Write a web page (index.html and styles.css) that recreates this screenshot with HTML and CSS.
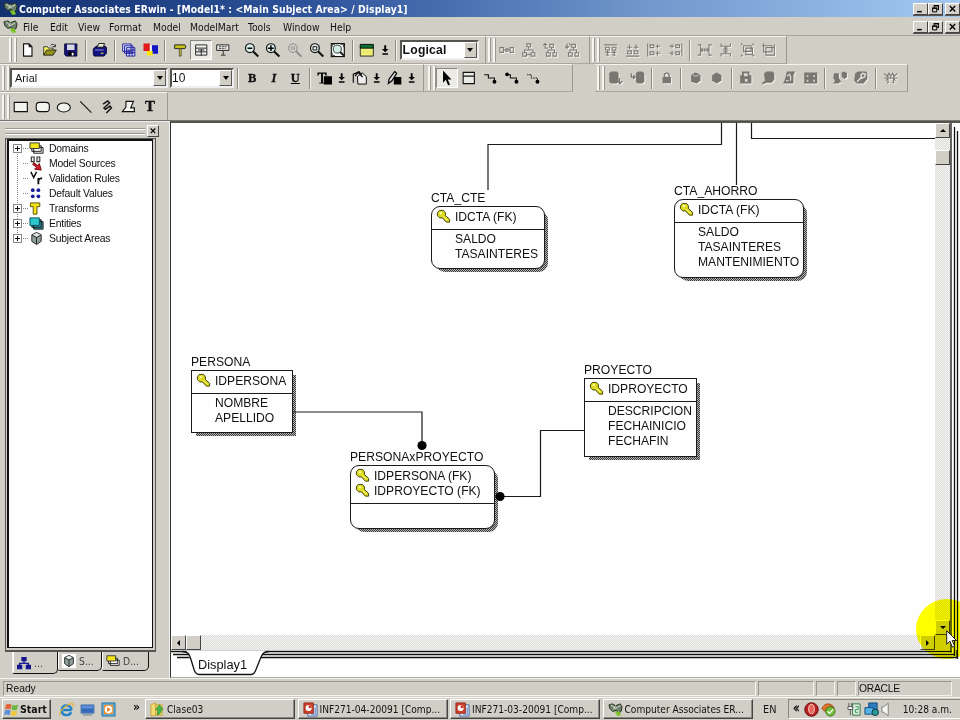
FILE: index.html
```html
<!DOCTYPE html>
<html lang="en">
<head>
<meta charset="utf-8">
<title>Computer Associates ERwin</title>
<link rel="stylesheet" href="styles.css">
</head>
<body>
<svg class="defs" width="0" height="0">
  <defs>
    <symbol id="app" viewBox="0 0 16 16"><path d="M1 3 5 2l3 2 5-2 2 3-1 5-3 2-2-3-4 1-3-3z" fill="#6d7f6a" stroke="#22301f"/><path d="M3 3l5 4 5-3M6 8l2-4" stroke="#dfe8d8" fill="none"/><path d="M7 10l3 5 4-1-2-4z" fill="#7cc426"/></symbol>
    <symbol id="new" viewBox="0 0 16 16"><path d="M3.500 1.500h6l3 3v10h-9zM9.500 1.500v3h3" fill="#fff" stroke="#111" stroke-width="1.200"/></symbol>
    <symbol id="open" viewBox="0 0 16 16"><path d="M1.500 13.500v-9h4l1 1.500h5v2" fill="#ff6" stroke="#333"/><path d="M1.500 13.500l3-5.500h10.500l-3.500 5.500z" fill="#96951a" stroke="#222"/><path d="M9 3c2-2 4-1 4.500 1M14 2v2.500h-3" fill="none" stroke="#222"/></symbol>
    <symbol id="save" viewBox="0 0 16 16"><path d="M1.500 1.500h13v13H3l-1.500-1.500z" fill="#15157c" stroke="#050530"/><path d="M4 2h8v6H4z" fill="#d7d7e4"/><path d="M5 10h7v4H5z" fill="#000"/><path d="M9 11h2v3H9z" fill="#fff"/></symbol>
    <symbol id="print" viewBox="0 0 16 16"><path d="M1 7l3-3h10l1.500 2v5l-3 3.500H2L1 12z" fill="#13137f" stroke="#05053a"/><path d="M5 5l2-4h6l-1 4z" fill="#e9e9d8" stroke="#111"/><path d="M3 8h9" stroke="#9b9bd8"/><path d="M9 11h3v1H9z" fill="#ee3"/></symbol>
    <symbol id="report" viewBox="0 0 16 16"><g fill="#dfe2ff" stroke="#1d1d9a"><path d="M1.500 1.500h9v8h-9zM3.500 3.500h9v8h-9zM5.500 5.500h9v9h-9z"/><path d="M5.500 8h9M8.500 8v6.500M11.500 8v6.500M5.500 11h9"/></g></symbol>
    <symbol id="colors" viewBox="0 0 16 16"><path d="M0 1h7v8H0z" fill="#e01818"/><path d="M9 3h7v9H9z" fill="#1212c8"/><path d="M4 9h6v5H4z" fill="#ffe800"/><path d="M7 3h2v6H7z" fill="#fff"/></symbol>
    <symbol id="tsign" viewBox="0 0 16 16"><path d="M2.500 2.500h11l1 2-1 2h-11z" fill="#c8c31c" stroke="#222"/><path d="M7.500 6.500h2v8h-2z" fill="#ddd632" stroke="#333" stroke-width=".8"/></symbol>
    <symbol id="ent" viewBox="0 0 16 16"><path d="M2.500 2.500h12v11h-12zM2.500 6h12M2.500 10h12" fill="#eee" stroke="#222"/><path d="M8.500 7v7M5 8h7" stroke="#222"/></symbol>
    <symbol id="board" viewBox="0 0 16 16"><path d="M1.500 2.500h13v6h-13z" fill="#e4e4e0" stroke="#222"/><path d="M4 4.500h8M4 6.500h7" stroke="#333" stroke-dasharray="2 1"/><path d="M8.500 9v4M6 13.500h5" stroke="#222"/></symbol>
    <symbol id="lens" viewBox="0 0 16 16"><circle cx="6" cy="6" r="4.700" fill="#dceeea" stroke="#111" stroke-width="1.300"/><path d="M9.500 9.500 15 15" stroke="#111" stroke-width="2.200"/></symbol>
    <symbol id="zout" viewBox="0 0 16 16"><use href="#lens"/><path d="M3.500 6h5" stroke="#000" stroke-width="1.600"/></symbol>
    <symbol id="zin" viewBox="0 0 16 16"><use href="#lens"/><path d="M3 6h6M6 3v6" stroke="#000" stroke-width="1.600"/></symbol>
    <symbol id="zoff" viewBox="0 0 16 16"><circle cx="6" cy="6" r="4.700" fill="none" stroke="#888"/><path d="M9.500 9.500 15 15" stroke="#888" stroke-width="2"/><path d="M4 5l1-1v4M7.500 4v4" stroke="#888" fill="none"/></symbol>
    <symbol id="zsel" viewBox="0 0 16 16"><use href="#lens"/><path d="M4 4.500h4v3.500H4z" fill="#fff" stroke="#000"/></symbol>
    <symbol id="zfit" viewBox="0 0 16 16"><path d="M1 1h14v14H1z" fill="#f8fbf8" stroke="#111" stroke-width="1.300"/><circle cx="7.500" cy="7" r="4.300" fill="#d2ece6" stroke="#333"/><path d="M10.500 10l4 4" stroke="#111" stroke-width="2"/><path d="M2 5V2h3M2 11v3h3M11 2h3v3" stroke="#333" fill="none"/></symbol>
    <symbol id="win" viewBox="0 0 16 16"><path d="M1 2.500h14v12H1z" fill="#efee77" stroke="#222"/><path d="M1 2h14v4H1z" fill="#087030" stroke="#111"/><path d="M2 10h12" stroke="#d9d650" stroke-dasharray="1 1"/></symbol>
    <symbol id="down" viewBox="0 0 10 16"><path d="M4 3h2v4h2.500L5 10.500 1.500 7H4zM2 11.500h6V13H2z" fill="#000"/></symbol>
    <symbol id="d1" viewBox="0 0 16 16"><path d="M.5 5.500h4v5h-4zM11.500 5.500h4v5h-4zM5 8h6" class="g"/><circle cx="8" cy="8" r="1.500" class="g"/></symbol>
    <symbol id="d2" viewBox="0 0 16 16"><path d="M6 1.500h4v3H6zM8 5v3M3.500 11V8h9v3M1.500 11h4v3.500h-4zM10.500 11h4v3.500h-4zM6 13h4" class="g"/></symbol>
    <symbol id="d3" viewBox="0 0 16 16"><path d="M8 2h4v3H8zM10 5v3M6 11V8h7v3M4.500 11h4v3.500h-4zM11.500 11h4v3.500h-4zM1 3l2-2 2 2M3 1v5h3" class="g"/></symbol>
    <symbol id="d4" viewBox="0 0 16 16"><path d="M8 2h4v3H8zM10 5v3M6 11V8h7v3M4.500 11h4v3.500h-4zM11.500 11h4v3.500h-4zM1 4l2 2 2-2M3 1v5M5 1l2 2" class="g"/></symbol>
    <symbol id="a1" viewBox="0 0 16 16"><path d="M1 2.500h14M2.500 5h4v3h-4zM9.500 5h4v3h-4zM4.500 8v5M11.500 8v5M2 10.500h5M9 10.500h5M3 13.500h3M10 13.500h3" class="g"/></symbol>
    <symbol id="a2" viewBox="0 0 16 16"><path d="M1 14.500h14M2.500 9h4v3h-4zM9.500 9h4v3h-4zM4.500 2v5M11.500 2v5M2 5h5M9 5h5" class="g"/></symbol>
    <symbol id="a3" viewBox="0 0 16 16"><path d="M1.500 1v14M4 2.500h4v3H4zM4 10h4v3H4zM10 4h5M12 2v4M10 11.500h5M12 9v5" class="g"/></symbol>
    <symbol id="a4" viewBox="0 0 16 16"><path d="M14.500 1v14M8 2.500h4v3H8zM8 10h4v3H8zM1 4h5M4 2v4M1 11.500h5M4 9v5" class="g"/></symbol>
    <symbol id="a5" viewBox="0 0 16 16"><path d="M.5 2.500h3v11h-3M15.500 2.500h-3v11h3M3 8h10M6 6L4 8l2 2M10 6l2 2-2 2M8 6v4" class="g"/></symbol>
    <symbol id="a6" viewBox="0 0 16 16"><path d="M3 1v3h10V1M3 15v-3h10v3M8 4v8M6 6h4M6 10h4M5 8h6" class="g"/></symbol>
    <symbol id="a7" viewBox="0 0 16 16"><path d="M3.500 3.500h8v6h-8zM6 6h7v7H6z" class="g"/><path d="M.5 1h2v2h-2zM13 1h2v2h-2zM.5 13h2v2h-2zM13 13h2v2h-2z" fill="#85857f"/></symbol>
    <symbol id="a8" viewBox="0 0 16 16"><path d="M2.500 1v9h9V3.500H0M5 5.500h9v8H5zM14 5v-3" class="g"/></symbol>
    <symbol id="bt" viewBox="0 0 16 16"><path d="M0 2h10v3.500H9L8 3.500H6V13h2v1H2v-1h2V3.500H2L1 5.500H0z" fill="#000"/><path d="M7 6h9v9H7z" fill="#000"/></symbol>
    <symbol id="bucket" viewBox="0 0 16 16"><path d="M5.500 6.500l5-4 4.500 4v8H6z" fill="#eee" stroke="#000"/><path d="M1 13V4l5-2 5 5M3 6l4-5 3 4" fill="none" stroke="#111" stroke-width="1.400"/></symbol>
    <symbol id="pen" viewBox="0 0 16 16"><path d="M7 7h8v8H7z" fill="#000"/><path d="M1 14l1-5 6-8 2 2-5 8z" fill="#ddd" stroke="#000" stroke-width="1.300"/></symbol>
    <symbol id="ptr" viewBox="0 0 16 16"><path d="M4 0v13l3-3 2.500 6 2-1L9 9.500h4z" fill="#000"/></symbol>
    <symbol id="tbl" viewBox="0 0 16 16"><path d="M2 2h12v12H2zM2 6h12" fill="#ebebe5" stroke="#111" stroke-width="1.200"/></symbol>
    <symbol id="r1" viewBox="0 0 16 16"><path d="M2 4.500h4.500V8H13v3" fill="none" stroke="#111" stroke-width="1.200"/><circle cx="13" cy="12" r="2.100"/></symbol>
    <symbol id="r2" viewBox="0 0 16 16"><path d="M2 4.500h4.500V8H13v3" fill="none" stroke="#111" stroke-width="1.200"/><circle cx="3" cy="4" r="2"/><circle cx="13" cy="12" r="2.100"/></symbol>
    <symbol id="r3" viewBox="0 0 16 16"><path d="M2 4.500h4.500V8H13v3" fill="none" stroke="#111" stroke-width="1.200" stroke-dasharray="1.500 1"/><circle cx="13" cy="12" r="2.100"/></symbol>
    <symbol id="db" viewBox="0 0 16 16"><path d="M1 3l2-2h6l2 2v9l-2 2H3l-2-2z" fill="#777770"/><path d="M12 8v5M10 11l2.500 3 2.500-3" stroke="#777770" fill="none" stroke-width="1.400"/></symbol>
    <symbol id="db2" viewBox="0 0 16 16"><path d="M6 3l2-2h5l2 2v9l-2 2H8l-2-2z" fill="#777770"/><path d="M1 3v4h4M3 5l2 2-2 2" stroke="#777770" fill="none" stroke-width="1.400"/></symbol>
    <symbol id="lock" viewBox="0 0 16 16"><path d="M3.500 7h9v6.500h-9z" fill="#777770"/><path d="M5.500 7V5c0-3 5-3 5 0v2" fill="none" stroke="#777770" stroke-width="1.500"/></symbol>
    <symbol id="cube" viewBox="0 0 16 16"><path d="M3 5l4-3 3 1 3 2v6l-4 3-6-2z" fill="#777770"/><path d="M5 5l3 1 3-1" stroke="#ccc" fill="none"/></symbol>
    <symbol id="hexa" viewBox="0 0 16 16"><path d="M8 2l5 3v6l-5 3-5-3V5z" fill="#777770"/></symbol>
    <symbol id="e1" viewBox="0 0 16 16"><path d="M4 1h8v4h2v9H2V5h2z" fill="#777770"/><path d="M6 3h4v3H6zM7 9h3v3H7z" fill="#d8d6ce"/></symbol>
    <symbol id="e2" viewBox="0 0 16 16"><path d="M4 3l3-2h6l2 2v7l-3 3H7l-5 2v-2l3-2z" fill="#777770"/></symbol>
    <symbol id="e3" viewBox="0 0 16 16"><path d="M6 1h9l-2 4v9H2l2-5z" fill="#777770"/><path d="M6 6l3-2 1 4M5 11h3M10 6v5" stroke="#e6e4dd" stroke-width="1.200" fill="none"/></symbol>
    <symbol id="e4" viewBox="0 0 16 16"><path d="M1 2h14v12H1z" fill="#777770"/><path d="M3.500 5h2v2h-2zM10.500 5h2v2h-2zM3.500 10h2v2h-2zM10.500 10h2v2h-2z" fill="#d0cec6"/></symbol>
    <symbol id="e5" viewBox="0 0 16 16"><path d="M2 3h5v5l2 3-2 3H1l2-3-2-3z" fill="#777770"/><path d="M10 2l3-1 3 2v4l-3 2-3-2z" fill="#777770"/><path d="M6 12h4" stroke="#777770"/></symbol>
    <symbol id="e6" viewBox="0 0 16 16"><path d="M2 3l3-2h9l1 2v6l-4 5H4l-3-3z" fill="#777770"/><path d="M4 12l5-5M8 5l2-2 3 1-1 3-3 1z" stroke="#e4e2da" stroke-width="1.500" fill="none"/></symbol>
    <symbol id="e7" viewBox="0 0 16 16"><path d="M1 3l3 3 2-3 2 3 2-3 2 3 3-3M1 8h14M5 5v8M8 5v4M11 5v8M3 11l2-3M13 11l-2-3M4 13h2M10 13h2" class="g"/></symbol>
    <symbol id="key" viewBox="0 0 16 16"><path d="M1.500 4l2-2.500h4.500L10 4v3l4.500 4v3h-3.500L7 9.500H4L1.500 7z" fill="#dcdb20" stroke="#3c3c00"/><path d="M4 4.500h2.500" stroke="#fffbb0" stroke-width="2"/><path d="M8 8l4 4" stroke="#fffa90"/></symbol>
    <symbol id="dom" viewBox="0 0 16 16"><path d="M5 7h10v6H5zM3 5h10v6H3z" fill="#fff" stroke="#111"/><path d="M1 2h10v6H1z" fill="#f3e51a" stroke="#333"/></symbol>
    <symbol id="msrc" viewBox="0 0 16 16"><path d="M2.500 1v5h3V1zM8.500 1v5h3V1z" fill="#eee" stroke="#333" stroke-width="1.200"/><path d="M5 7l4 3 2-2 2 7-7-1 2-2-4-3z" fill="#cc1f2f" stroke="#700"/></symbol>
    <symbol id="vr" viewBox="0 0 16 16"><path d="M2 1l3 6 3-6" fill="none" stroke="#111" stroke-width="1.600"/><path d="M10 14V7.500M10 10c1-2 2-2.500 4-2" fill="none" stroke="#111" stroke-width="2"/></symbol>
    <symbol id="dots" viewBox="0 0 16 16"><g fill="#1b1b9c"><circle cx="4" cy="4.500" r="2"/><circle cx="10" cy="4.500" r="2"/><circle cx="4" cy="11" r="2"/><circle cx="10" cy="11" r="2"/></g></symbol>
    <symbol id="tt" viewBox="0 0 16 16"><path d="M1.500 2h10v4h-3v8h-4V6h-3z" fill="#f2e21a" stroke="#5a5000"/></symbol>
    <symbol id="enti" viewBox="0 0 16 16"><path d="M5 6h10v8H5zM3 4h10v8H3z" fill="#39a" stroke="#111"/><path d="M1 2h10v8H1z" fill="#2cc7cf" stroke="#0a4d55"/></symbol>
    <symbol id="subj" viewBox="0 0 16 16"><path d="M8 1.500l5 2.500v7l-5 3.500L3 11V4z" fill="#8ea09a" stroke="#222"/><path d="M8 7v7M3.500 4.500L8 7l4.500-2.500" stroke="#222" fill="none"/><path d="M8 2l4 2-4 2-4-2z" fill="#dfe5e2"/></symbol>
    <symbol id="tree" viewBox="0 0 16 16"><path d="M5 1h6v5H5zM0 10h6v5H0zM10 10h6v5h-6z" fill="#151591"/><path d="M8 5v4M3 11V8.500h10V11" stroke="#151591" fill="none" stroke-width="1.500"/></symbol>
    <symbol id="flag" viewBox="0 0 16 16"><path d="M2 3c2-2 4-1 6 0L7 8C5 7 3 7 1 8z" fill="#e2643a"/><path d="M9 3c2 1 4 1 6 0l-1 5c-2 1-4 1-6 0z" fill="#6bb544"/><path d="M1 9c2-1 4-1 6 0l-1 5c-2-1-4-1-6 0z" fill="#5b90d8"/><path d="M8 9c2 1 4 1 6 0l-1 5c-2 1-4 1-6 0z" fill="#f0c93c"/></symbol>
    <symbol id="ie" viewBox="0 0 16 16"><path d="M13.500 8.500H4.500M13.300 8.500C13 2.500 3.500 2 3 8.500s8 7 10 2.500" fill="none" stroke="#2582c8" stroke-width="2.600"/><path d="M1 14C-1 10 11 0 15 2c1 1 0 2-.5 3" fill="none" stroke="#e5b53a" stroke-width="1.300"/></symbol>
    <symbol id="desk" viewBox="0 0 16 16"><path d="M1 3h14v9H1z" fill="#3568b8" stroke="#6a89b5"/><path d="M2 4h12v3H2z" fill="#5e90d8"/><path d="M3 13h10v1.500H3z" fill="#8393aa"/></symbol>
    <symbol id="wmp" viewBox="0 0 16 16"><path d="M1 1h14v14H1z" fill="#55a9d8" stroke="#2c77a8"/><path d="M3 3h10v10H3z" fill="#ef9430"/><circle cx="8" cy="8" r="4" fill="#fff"/><path d="M6.500 5.500v5l4-2.500z" fill="#e8751b"/></symbol>
    <symbol id="fold" viewBox="0 0 16 16"><path d="M1 3l5-2v13l-5 1zM6 3h7v11H6z" fill="#f3dc72" stroke="#c9a63b"/><path d="M8 14V8H6l4-5 4 5h-2c0 3-1 5-4 6z" fill="#48b54a" stroke="#24872b" stroke-width=".7"/></symbol>
    <symbol id="ppt" viewBox="0 0 16 16"><path d="M5 3h10v12H5z" fill="#dbe6f6" stroke="#4468a0"/><path d="M9 13h5M13 6v6" stroke="#547bc0"/><path d="M1 1h10v11H1z" fill="#ce412c" stroke="#98291a"/><circle cx="6" cy="6.500" r="3.200" fill="#fff"/><path d="M6 6.500V3.300A3.200 3.200 0 0 1 9.200 6.500z" fill="#ce412c"/></symbol>
    <symbol id="red" viewBox="0 0 16 16"><circle cx="8" cy="8" r="7.200" fill="#b81f20" stroke="#661010"/><ellipse cx="8" cy="7.500" rx="3" ry="5" fill="#e66558" stroke="#ffd8d0"/></symbol>
    <symbol id="eye" viewBox="0 0 16 16"><path d="M1 7c3-7 10-6 13-1-5-2-8 0-10 4z" fill="#e2742c" stroke="#a34b16"/><circle cx="10" cy="10" r="5" fill="#72bd37" stroke="#37761d"/><path d="M7 10l2 2 4-4" fill="none" stroke="#fff" stroke-width="1.500"/></symbol>
    <symbol id="usb" viewBox="0 0 16 16"><path d="M6 2h8v12H6z" fill="#dceddb" stroke="#2e7748"/><path d="M2 1v4M5 1v4M1 5h5v3H1zM3.500 8v6" fill="#fff" stroke="#555"/><path d="M9 5h3v3H9v3h3" stroke="#36965a" fill="none"/></symbol>
    <symbol id="net" viewBox="0 0 16 16"><path d="M5 1h9v7H5z" fill="#2e7fc2" stroke="#164a78"/><path d="M1 6h9v7H1z" fill="#55b3e6" stroke="#164a78"/><circle cx="12" cy="11" r="3.500" fill="#2a9a8c" stroke="#135"/></symbol>
    <symbol id="spk" viewBox="0 0 10 16"><path d="M1 5h2l5-4v14l-5-4H1z" fill="#f5f5f2" stroke="#777"/></symbol>
    <symbol id="minw" viewBox="0 0 14 12"><path d="M3 9.200h5.500" stroke="#000" stroke-width="1.800"/></symbol>
    <symbol id="rest" viewBox="0 0 14 12"><path d="M5.500 4V2h5v4.500H9" fill="none" stroke="#000" stroke-width="1.300"/><path d="M5 2h6M3 5h6" stroke="#000" stroke-width="1.600"/><path d="M3.500 5h5v4.500h-5z" fill="none" stroke="#000" stroke-width="1.200"/></symbol>
    <symbol id="x" viewBox="0 0 14 12"><path d="M3.800 2.500l6.400 6.500M10.200 2.500L3.800 9" stroke="#000" stroke-width="1.600"/></symbol>
  </defs>
</svg>

<header class="titlebar">
  <svg class="ic"><use href="#app"/></svg>
  <h1>Computer Associates ERwin - [Model1* : &lt;Main Subject Area&gt; / Display1]</h1>
  <div class="winbtns"><svg><use href="#minw"/></svg><svg><use href="#rest"/></svg><svg class="gap"><use href="#x"/></svg></div>
</header>
<nav class="menubar">
  <svg class="ic"><use href="#app"/></svg>
  <span>File</span><span>Edit</span><span>View</span><span>Format</span><span>Model</span><span>ModelMart</span><span>Tools</span><span>Window</span><span>Help</span>
  <div class="winbtns"><svg><use href="#minw"/></svg><svg><use href="#rest"/></svg><svg class="gap"><use href="#x"/></svg></div>
</nav>

<section class="tools">
  <div class="row">
    <div class="band b1"><i class="grip"></i>
      <svg><use href="#new"/></svg><svg><use href="#open"/></svg><svg><use href="#save"/></svg><i class="sep"></i>
      <svg><use href="#print"/></svg><i class="sep"></i>
      <svg><use href="#report"/></svg><svg><use href="#colors"/></svg><i class="sep"></i>
      <svg><use href="#tsign"/></svg><svg class="on"><use href="#ent"/></svg><svg><use href="#board"/></svg><i class="sep none"></i>
      <svg><use href="#zout"/></svg><svg><use href="#zin"/></svg><svg><use href="#zoff"/></svg><svg><use href="#zsel"/></svg><svg><use href="#zfit"/></svg><i class="sep"></i>
      <svg><use href="#win"/></svg><svg class="dn"><use href="#down"/></svg><i class="sep"></i>
      <div class="combo logical"><b>Logical</b><i class="drop"></i></div>
    </div>
    <div class="band b2 off"><i class="grip"></i>
      <svg><use href="#d1"/></svg><svg><use href="#d2"/></svg><svg><use href="#d3"/></svg><svg><use href="#d4"/></svg>
    </div>
    <div class="band b3 off"><i class="grip"></i>
      <svg><use href="#a1"/></svg><svg><use href="#a2"/></svg><svg><use href="#a3"/></svg><svg><use href="#a4"/></svg><i class="sep"></i>
      <svg><use href="#a5"/></svg><svg><use href="#a6"/></svg><svg><use href="#a7"/></svg><svg><use href="#a8"/></svg>
    </div>
  </div>
  <div class="row">
    <div class="band c1"><i class="grip"></i>
      <div class="combo face"><span>Arial</span><i class="drop"></i></div>
      <div class="combo size"><span>10</span><i class="drop"></i></div><i class="sep"></i>
      <b class="fmt">B</b><b class="fmt it">I</b><b class="fmt ul">U</b><i class="sep"></i>
      <svg><use href="#bt"/></svg><svg class="dn"><use href="#down"/></svg>
      <svg><use href="#bucket"/></svg><svg class="dn"><use href="#down"/></svg>
      <svg><use href="#pen"/></svg><svg class="dn"><use href="#down"/></svg>
    </div>
    <div class="band c2"><i class="grip"></i>
      <svg class="on"><use href="#ptr"/></svg><svg><use href="#tbl"/></svg><svg><use href="#r1"/></svg><svg><use href="#r2"/></svg><svg><use href="#r3"/></svg>
    </div>
    <div class="band c3 off"><i class="grip"></i>
      <svg><use href="#db"/></svg><svg><use href="#db2"/></svg><i class="sep"></i>
      <svg><use href="#lock"/></svg><i class="sep"></i>
      <svg><use href="#cube"/></svg><svg><use href="#hexa"/></svg><i class="sep"></i>
      <svg><use href="#e1"/></svg><svg><use href="#e2"/></svg><svg><use href="#e3"/></svg><svg><use href="#e4"/></svg><i class="sep"></i>
      <svg><use href="#e5"/></svg><svg><use href="#e6"/></svg><i class="sep"></i>
      <svg><use href="#e7"/></svg>
    </div>
  </div>
  <div class="row last">
    <div class="band s1"><i class="grip"></i>
      <svg viewBox="0 0 16 16"><path d="M1 3h14v10H1z" class="k"/></svg>
      <svg viewBox="0 0 16 16"><rect x="1" y="3" width="14" height="10" rx="3.500" class="k"/></svg>
      <svg viewBox="0 0 16 16"><ellipse cx="8" cy="8.500" rx="7" ry="4.800" class="k"/></svg>
      <svg viewBox="0 0 16 16"><path d="M2 2l12 12" class="k"/></svg>
      <svg viewBox="0 0 16 16"><path d="M4 5l5-3.500 2 2L5 9l1.500 1.500 5-3.500 1.500 2-5.500 5.500" class="k n"/></svg>
      <svg viewBox="0 0 16 16"><path d="M5 2h8l-3 7h4v4H1l4-5z" class="k"/></svg>
      <b class="fmt big">T</b>
    </div>
  </div>
</section>

<main>
  <aside>
    <div class="dock"><i></i><svg><use href="#x"/></svg></div>
    <div class="treebox">
      <ul>
        <li class="p"><svg><use href="#dom"/></svg>Domains</li>
        <li><svg><use href="#msrc"/></svg>Model Sources</li>
        <li><svg><use href="#vr"/></svg>Validation Rules</li>
        <li><svg><use href="#dots"/></svg>Default Values</li>
        <li class="p"><svg><use href="#tt"/></svg>Transforms</li>
        <li class="p"><svg><use href="#enti"/></svg>Entities</li>
        <li class="p"><svg><use href="#subj"/></svg>Subject Areas</li>
      </ul>
    </div>
    <div class="tabs">
      <span class="cur"><svg><use href="#tree"/></svg>...</span><span><svg class="w"><use href="#subj"/></svg>S...</span><span><svg><use href="#dom"/></svg>D...</span>
    </div>
  </aside>
  <section class="work">
    <div class="view">
      <div class="canvas">
        <article class="node round cte"><h2>CTA_CTE</h2><div class="box"><p class="pk"><svg><use href="#key"/></svg>IDCTA (FK)</p><div><p>SALDO</p><p>TASAINTERES</p></div></div></article>
        <article class="node round aho"><h2>CTA_AHORRO</h2><div class="box"><p class="pk"><svg><use href="#key"/></svg>IDCTA (FK)</p><div><p>SALDO</p><p>TASAINTERES</p><p>MANTENIMIENTO</p></div></div></article>
        <article class="node per"><h2>PERSONA</h2><div class="box"><p class="pk"><svg><use href="#key"/></svg>IDPERSONA</p><div><p>NOMBRE</p><p>APELLIDO</p></div></div></article>
        <article class="node pro"><h2>PROYECTO</h2><div class="box"><p class="pk"><svg><use href="#key"/></svg>IDPROYECTO</p><div><p>DESCRIPCION</p><p>FECHAINICIO</p><p>FECHAFIN</p></div></div></article>
        <article class="node round pxp"><h2>PERSONAxPROYECTO</h2><div class="box"><p class="pk two"><svg><use href="#key"/></svg>IDPERSONA (FK)<br><svg><use href="#key"/></svg>IDPROYECTO (FK)</p><div></div></div></article>
        <svg class="links" viewBox="171 123 764 512"><g fill="none" stroke="#1a1a1a" stroke-width="1.200"><path d="M721.500 122v22.500H488V190M736.500 122v63M751.500 122v16.500H936M293 412h129v30M584 430.500h-43.500v66H504"/></g><circle cx="422" cy="445.500" r="4.600"/><circle cx="500" cy="496.500" r="4.600"/></svg>
      </div>
      <div class="vbar"><i class="sb up"></i><i class="sb thumb"></i><i class="sb dwn"></i></div>
      <div class="hbar"><i class="sb lft"></i><i class="sb thumb"></i><i class="sb rgt"></i></div>
      <div class="corner"></div>
    </div>
    <svg class="edges" viewBox="0 0 24 536"><path d="M16 0v529.500M19.500 4v529M22.500 8v528" fill="none" stroke="#111" stroke-width="1.300"/></svg>
    <svg class="sheet" viewBox="171 650 789 28">
      <path d="M171 651.500H951.500M173 654.500H954.500V650M177 657.500H957V650" fill="none" stroke="#111" stroke-width="1.300"/>
      <path d="M186 650.800h80c-3 2-5 5-6 9l-4 10c-1 3-2 4.500-5 4.500h-53c-3 0-4-1.500-5-4.500l-4-14c-1-3-2-4-3-5z" fill="#fff"/>
      <path d="M182 651.500c6 0 7 2 9 8l3 10c1 3 2 5 5 5h52c3 0 4-2 5-5l4-10c2-6 4-8 9-8" fill="none" stroke="#111" stroke-width="1.300"/>
    </svg>
    <span class="display">Display1</span>
    <i class="halo"></i>
    <svg class="mouse" viewBox="0 0 12 18"><path d="M.7.7v13.500l3.200-3 2.500 6 2.300-1-2.500-5.700h4.300z" fill="#fff" stroke="#222"/></svg>
  </section>
</main>

<footer class="status"><span>Ready</span><span></span><span></span><span></span><span>ORACLE</span></footer>
<div class="taskbar">
  <b class="start"><svg><use href="#flag"/></svg>Start</b>
  <div class="quick"><svg><use href="#ie"/></svg><svg><use href="#desk"/></svg><svg><use href="#wmp"/></svg><b>»</b></div>
  <span class="task"><svg><use href="#fold"/></svg>Clase03</span>
  <span class="task"><svg><use href="#ppt"/></svg>INF271-04-20091 [Comp...</span>
  <span class="task"><svg><use href="#ppt"/></svg>INF271-03-20091 [Comp...</span>
  <span class="task"><svg><use href="#app"/></svg>Computer Associates ER...</span>
  <span class="lang">EN</span>
  <div class="tray"><b>«</b><svg><use href="#red"/></svg><svg><use href="#eye"/></svg><svg class="sp"><use href="#usb"/></svg><svg><use href="#net"/></svg><svg class="thin"><use href="#spk"/></svg><time>10:28 a.m.</time></div>
</div>
</body>
</html>
```
FILE: styles.css
```css
*, ::before, ::after { box-sizing: border-box; }
html, body { margin: 0; }
body {
  width: 960px; height: 720px; overflow: hidden;
  display: grid; grid-template-rows: 17px 19px 85px 557px 19px 23px;
  background: #d0cec5; color: #111;
  font: 10.3px "DejaVu Sans Condensed", "DejaVu Sans", sans-serif;
  font-stretch: condensed;
}
.defs { position: absolute; }
svg { display: block; flex: none; }
h1, h2, p, ul { margin: 0; padding: 0; font-weight: normal; }
.g { fill: none; stroke: #7d7d76; stroke-width: 1.2; }
.k { fill: #f4f4ee; stroke: #111; stroke-width: 1.2; }
.k.n { fill: none; stroke-width: 1.5; }

.titlebar { display: flex; align-items: center; background: linear-gradient(90deg, #12306f, #2f549c 33%, #6f95cb 66%, #a3c9f2); color: #fff; padding-right: 1px; }
.ic { width: 15px; height: 15px; margin-left: 3px; }
.titlebar h1 { font-size: 10.3px; font-weight: bold; letter-spacing: .09px; margin-left: 1px; white-space: nowrap; }
.winbtns { display: flex; margin-left: auto; }
.winbtns svg { width: 15px; height: 12px; background: #d4d1c9; border: 1px solid; border-color: #fff #444 #444 #fff; box-shadow: 0 1px #555; }
.winbtns .gap { margin-left: 2px; }
.menubar { display: grid; grid-template-columns: 23px 27px 28px 31px 44px 37px 58px 35px 47px 30px 1fr; align-items: center; padding: 1px 1px 0 0; border-bottom: 1px solid #a5a39c; white-space: nowrap; font-size: 10.3px; }

.tools { display: grid; grid-template-rows: 28px 28px 28px; border-bottom: 1px solid #77756e; }
.row { display: flex; }
.band { display: flex; align-items: center; height: 28px; border-top: 1px solid #f4f3ee; border-bottom: 1px solid #aaa8a0; border-right: 1px solid #99978f; }
.band svg { width: 21.56px; height: 20px; padding: 2.5px 3.3px; }
.band svg.dn { width: 14.4px; padding: 2.5px 2px; }
.off svg { filter: drop-shadow(1px 1px 0 #f3f2ec); }
.on { background: #eceae4; border: 1px solid; border-color: #888 #fff #fff #888; padding: 1.5px 2.3px !important; }
.grip { width: 7px; height: 24px; margin-right: 1px; flex: none; border: solid #f6f5f0; border-width: 0 2px 0 2px; box-shadow: 1px 0 #99978f, inset -1px 0 0 #d0cec5, inset 1px 0 #99978f; }
.sep { width: 7.5px; height: 21px; flex: none; background: linear-gradient(90deg, transparent 3px, #8b8981 3px 4px, #f5f4ef 4px 5px, transparent 5px); }
.none { background: none; }
.b1 { width: 486px; padding-left: 9px; }
.b2 { width: 104px; padding-left: 2px; }
.b3 { width: 197px; padding-left: 2px; }
.c1 { width: 424px; padding-left: 2px; }
.band.c1 svg.dn { width: 13.4px; padding: 2.5px 1.5px; }
.c2 { width: 149px; padding-left: 4px; }
.c3 { width: 313px; margin-left: 22px; padding-left: 2px; }
.s1 { width: 168px; padding-left: 2px; border-bottom: 0; }
.combo { display: flex; justify-content: space-between; align-items: center; height: 20px; background: #fff; border: 2px solid; border-color: #55534e #eee #eee #55534e; padding-left: 3px; font-family: "Liberation Sans", sans-serif; font-size: 10.8px; flex: none; }
.logical { width: 79px; margin-left: 0; padding-left: 1px; font-size: 12.2px; letter-spacing: .2px; }
.face { width: 158px; letter-spacing: .15px; }
.size { width: 64px; margin: 0 0 0 2px; font-size: 12px; padding-left: 0; }
.drop { width: 13px; height: 16px; background: #d0cec5; border: 1px solid; border-color: #fff #555 #555 #fff; display: grid; place-items: center; }
.drop::after { content: ""; border: 3.5px solid transparent; border-top: 4px solid #000; border-bottom: 0; }
.fmt { width: 21.56px; text-align: center; font: bold 12.5px "Liberation Serif", serif; -webkit-text-stroke: .3px #000; }
.it { font-style: italic; }
.ul { text-decoration: underline; }
.big { font-size: 15px; }

main { display: grid; grid-template-columns: 170px 790px; min-height: 0; }
aside { border-top: 1px solid #eee; border-right: 1px solid #eee; padding: 2px 12px 0 5px; display: flex; flex-direction: column; }
.dock { display: flex; align-items: center; height: 13px; gap: 2px; }
.dock i { flex: 1; height: 6px; border: solid #99978f; border-width: 1px 0; box-shadow: 0 1px #fff, inset 0 1px #fff; }
.dock svg { width: 12px; height: 12px; border: 1px solid; border-color: #fff #444 #444 #fff; margin-right: -2px; }
.treebox { position: relative; margin-top: 1px; height: 514px; margin-right: 1px; border: solid #555; border-width: 1px 1px 2px 1px; padding: 0 2px 2px 1px; background: #d0cec5; }
.treebox ul { height: 100%; background: #fefefe; border: 2px solid #111; border-width: 2px 1px 1px 2px; list-style: none; padding: 0 0 0 4px; font: 10.4px "Liberation Sans", sans-serif; letter-spacing: -.22px; }
.treebox ul::before { content: ""; position: absolute; left: 11px; top: 12px; height: 90px; border-left: 1px dotted #888; }
li { display: flex; align-items: center; height: 15px; position: relative; white-space: nowrap; }
li::before { content: ""; width: 9px; height: 9px; flex: none; }
li.p::before { background: linear-gradient(#111, #111) center / 5px 1px no-repeat, linear-gradient(#111, #111) center / 1px 5px no-repeat, #fff; border: 1px solid #888; z-index: 1; }
li::after { content: ""; width: 5px; position: absolute; left: 10px; top: 7px; border-top: 1px dotted #888; }
li svg { width: 15px; height: 15px; margin: 0 5px 0 7px; }
.tabs { display: flex; height: 24px; margin: -1px -1px 0 7px; }
.tabs span { display: flex; align-items: center; gap: 3px; width: 44px; height: 20px; padding-left: 4px; border: solid #111; border-width: 1px 1px 1px 0; border-radius: 0 0 5px 2px; box-shadow: inset 1px 0 #fff; color: #444; }
.tabs span:last-child { width: 47px; }
.tabs svg { width: 14px; height: 14px; }
.tabs .cur { height: 23px; width: 46px; border-top-color: #d0cec5; border-left: 1px solid #eee; }
.w { background: #fff; }

.work { position: relative; display: flex; flex-direction: column; background: #fefefe; border-left: 1px solid #333; border-top: 2px solid #55534c; border-bottom: 1px solid #aaa; overflow: hidden; }
.view { display: grid; grid-template: 512px 15px / 764px 15px; width: 779px; }
.canvas { position: relative; font: 12.1px/15px "Liberation Sans", sans-serif; }
.links { position: absolute; inset: 0; width: 764px; height: 512px; }
.node { position: absolute; z-index: 0; }
.node h2 { font-size: 12.15px; line-height: 15px; height: 15px; white-space: nowrap; }
.box { position: relative; border: 1px solid #1a1a1a; background: #fefefe; }
.box::before { content: ""; position: absolute; inset: 4px -4px -4px 4px; z-index: -1; background: repeating-conic-gradient(#3c3c3c 0 25%, #b4b4b4 0 50%) 0 0 / 2px 2px; border-radius: inherit; }
.round .box { border-radius: 9px; }
.pk { height: 23px; border-bottom: 1px solid #1a1a1a; padding: 3px 0 0 23px; white-space: nowrap; }
.two { height: 38px; }
.pk svg { position: absolute; width: 15px; height: 15px; margin: -1px 0 0 -19px; }
.box div { padding: 2px 0 0 23px; }
.cte { left: 260px; top: 68px; } .cte .box { width: 114px; height: 63px; }
.aho { left: 503px; top: 61px; } .aho .box { width: 130px; height: 79px; }
.per { left: 20px; top: 232px; } .per .box { width: 102px; height: 63px; }
.pro { left: 413px; top: 240px; } .pro .box { width: 113px; height: 79px; }
.pxp { left: 179px; top: 327px; } .pxp .box { width: 145px; height: 64px; }
.vbar, .hbar { display: flex; background: repeating-conic-gradient(#dedddb 0 25%, #f3f3f1 0 50%) 0 0 / 2px 2px; }
.vbar { flex-direction: column; }
.sb { width: 15px; height: 15px; background: #d0cec5; border: 1px solid; border-color: #fff #444 #444 #fff; display: grid; place-items: center; }
.vbar .thumb { margin-top: 12px; }
.dwn { margin-top: auto; }
.hbar .rgt { margin-left: auto; }
.corner { background: #d0cec5; }
.up::after, .dwn::after, .lft::after, .rgt::after { content: ""; border: 3.5px solid transparent; }
.up::after { border-top: 0; border-bottom-color: #000; }
.dwn::after { border-bottom: 0; border-top-color: #000; }
.lft::after { border-left: 0; border-right-color: #000; }
.rgt::after { border-right: 0; border-left-color: #000; }
.edges { position: absolute; left: 764px; top: 0; width: 24px; height: 536px; }
.sheet { width: 789px; height: 28px; }
.display { position: absolute; left: 27px; top: 534px; font: 12.8px/15px "Liberation Sans", sans-serif; }
.halo { position: absolute; left: 745px; top: 476px; width: 62px; height: 60px; border-radius: 50%; background: #ffff00; mix-blend-mode: multiply; }
.mouse { position: absolute; left: 775px; top: 507px; width: 12px; height: 18px; }

.status { display: grid; grid-template-columns: 753px 56px 19px 19px 94px; gap: 2px; padding: 2px 0 2px 3px; border-top: 1px solid #f4f3ee; font: 10.3px "Liberation Sans", sans-serif; }
.status span { border: 1px solid; border-color: #99978f #f4f3ee #f4f3ee #99978f; padding: 1px 0 0 2px; line-height: 12px; }
.status span:last-child { letter-spacing: -.25px; padding-left: 0; }
.taskbar { display: flex; align-items: center; border-top: 1px solid #f6f5f0; white-space: nowrap; padding-left: 2px; font-size: 10.1px; }
.taskbar svg { width: 15px; height: 15px; }
.start, .task { display: flex; align-items: center; height: 20px; border: 1px solid; border-color: #fff #444 #444 #fff; box-shadow: inset -1px -1px #8b8981; }
.start { width: 49px; padding-left: 1px; gap: 1px; font-size: 10.5px; }
.quick { display: flex; align-items: center; width: 94px; padding-left: 8px; gap: 6px; }
.quick b { margin-left: 11px; font-size: 12px; margin-top: -5px; }
.task { width: 150px; margin-right: 2.5px; padding-left: 4px; gap: 2px; }
.lang { width: 33px; padding-left: 8px; font-size: 10.8px; }
.tray { display: flex; align-items: center; width: 173px; height: 20px; border: 1px solid; border-color: #8b8981 #fff #fff #8b8981; padding-left: 4px; gap: 2px; }
.tray b { font-size: 12px; font-weight: normal; margin: -2px 2px 0 0; -webkit-text-stroke: .4px #111; }
.tray .sp { margin-left: 9px; }
.tray .thin { width: 9px; }
.tray time { margin-left: auto; padding-right: 8px; }
```
